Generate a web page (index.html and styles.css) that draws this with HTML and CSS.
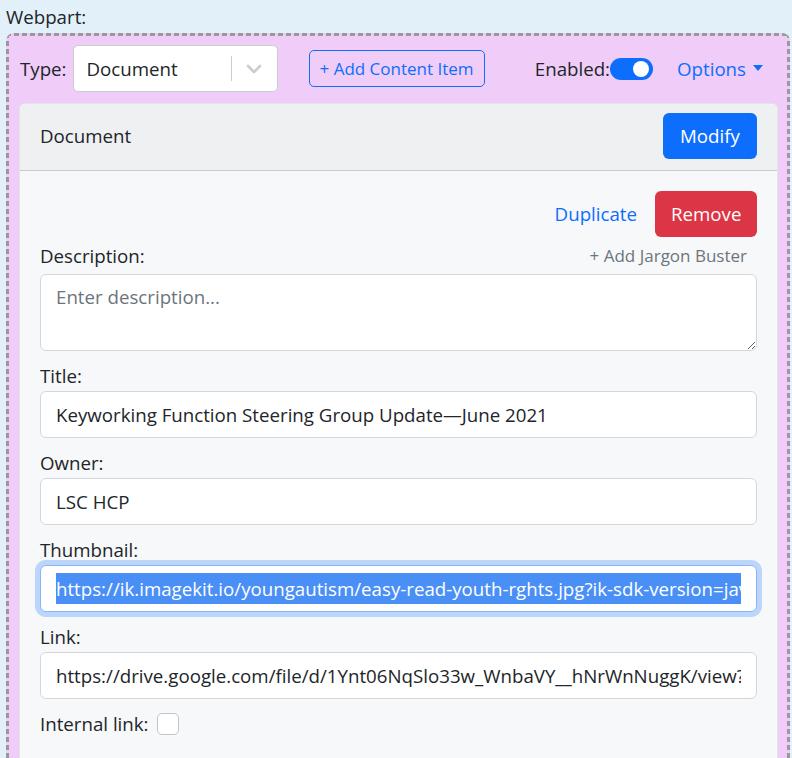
FILE: index.html
```html
<!DOCTYPE html>
<html lang="en">
<head>
<meta charset="utf-8">
<title>Webpart editor</title>
<link rel="stylesheet" href="styles.css">
</head>
<body class="page">
  <div class="webpart-label">Webpart:</div>
  <div class="webpart">
    <div class="toolbar">
      <div class="toolbar-left">
        <span class="type-label">Type:</span>
        <div class="select">
          <span class="select-value">Document</span>
          <span class="select-sep"></span>
          <span class="select-chevron">
            <svg width="16" height="12" viewBox="0 0 16 12"><path d="M2 3 L8 9 L14 3" fill="none" stroke="#cccccc" stroke-width="2.6" stroke-linecap="round" stroke-linejoin="round"/></svg>
          </span>
        </div>
        <button class="btn-outline">+ Add Content Item</button>
      </div>
      <div class="toolbar-right">
        <span class="enabled-label">Enabled:</span>
        <span class="switch"><span class="knob"></span></span>
        <button class="btn-options">Options <span class="caret"></span></button>
      </div>
    </div>

    <div class="card">
      <div class="card-header">
        <span class="card-title">Document</span>
        <button class="btn btn-primary">Modify</button>
      </div>
      <div class="card-body">
        <div class="actions">
          <button class="btn btn-link">Duplicate</button>
          <button class="btn btn-danger">Remove</button>
        </div>
        <div class="label-row">
          <label class="field-label">Description:</label>
          <button class="btn-jargon">+ Add Jargon Buster</button>
        </div>
        <textarea class="textarea" placeholder="Enter description..."></textarea>

        <label class="field-label">Title:</label>
        <input class="input" type="text" value="Keyworking Function Steering Group Update—June 2021">

        <label class="field-label">Owner:</label>
        <input class="input" type="text" value="LSC HCP">

        <label class="field-label">Thumbnail:</label>
        <div class="input input-focused">
          <div class="input-clip"><span class="selected">https://ik.imagekit.io/youngautism/easy-read-youth-rghts.jpg?ik-sdk-version=javascript-1.4.3&amp;updatedAt=1657291011</span></div>
        </div>

        <label class="field-label">Link:</label>
        <input class="input" type="text" value="https://drive.google.com/file/d/1Ynt06NqSlo33w_WnbaVY__hNrWnNuggK/view?usp=sharing">

        <div class="check-row">
          <span class="field-label-inline">Internal link:</span>
          <span class="checkbox"></span>
        </div>
      </div>
    </div>
  </div>
</body>
</html>
```

FILE: styles.css
```css
* { box-sizing: border-box; }

html, body { height: 100%; }

.page {
  margin: 0;
  padding: 2px 2px 0 6px;
  background: #e2f0fa;
  font-family: "Open Sans", "Noto Sans", sans-serif;
  font-size: 18.7px;
  line-height: 30px;
  color: #212529;
  overflow: hidden;
}

.webpart-label {
  height: 30px;
  margin: 0 0 1px 0;
}

.webpart {
  border-radius: 8px;
  background:
    repeating-linear-gradient(90deg, #999999 0 5px, transparent 5px 8px) left top / 100% 3px no-repeat,
    repeating-linear-gradient(90deg, #999999 0 5px, transparent 5px 8px) left bottom / 100% 3px no-repeat,
    repeating-linear-gradient(180deg, #999999 0 5px, transparent 5px 8px) left top / 3px 100% no-repeat,
    repeating-linear-gradient(180deg, #999999 0 5px, transparent 5px 8px) right top / 3px 100% no-repeat,
    #f0cdf8;
  padding: 12px 12px 0 13px;
  height: 900px;
}

.toolbar {
  display: flex;
  justify-content: space-between;
  align-items: center;
  height: 47px;
  margin-bottom: 11px;
}

.toolbar-left, .toolbar-right {
  display: flex;
  align-items: center;
}

.type-label { margin-left: 1px; margin-right: 6px; }

.select {
  width: 205px;
  height: 47px;
  background: #fff;
  border: 1px solid #cccccc;
  border-radius: 5px;
  display: flex;
  align-items: center;
  padding-left: 13px;
}

.select-value { flex: 1; }

.select-sep {
  width: 1px;
  height: 25px;
  background: #cccccc;
}

.select-chevron {
  width: 45px;
  display: flex;
  justify-content: center;
  align-items: center;
  height: 100%;
}

.select-chevron svg { display: block; }

.btn-outline {
  margin-left: 31px;
  height: 37px;
  padding: 0 10px;
  background: transparent;
  border: 1px solid #0d6efd;
  border-radius: 5px;
  color: #0d6efd;
  font-family: inherit;
  font-size: 17px;
  line-height: 26px;
}

.switch {
  width: 43px;
  height: 22px;
  border-radius: 11px;
  background: #0d6efd;
  display: flex;
  align-items: center;
  justify-content: flex-end;
  padding-right: 4px;
}

.knob {
  width: 16px;
  height: 16px;
  border-radius: 50%;
  background: #fff;
}

.btn-options {
  margin-left: 9px;
  padding: 0 15px;
  height: 40px;
  background: transparent;
  border: 0;
  color: #0d6efd;
  font-family: inherit;
  font-size: 18.7px;
  display: flex;
  align-items: center;
  gap: 7px;
}

.caret {
  width: 0;
  height: 0;
  border-top: 6px solid #0d6efd;
  border-left: 5.5px solid transparent;
  border-right: 5.5px solid transparent;
  margin-top: -2px;
}

.card {
  background: #f7f8fa;
  border: 1px solid rgba(0,0,0,0.08);
  border-radius: 6px;
  overflow: hidden;
}

.card-header {
  display: flex;
  justify-content: space-between;
  align-items: center;
  background: #eff0f2;
  padding: 9px 20px 11px 20px;
  border-bottom: 1px solid #c9cacc;
}

.btn {
  height: 46px;
  padding: 0 15px;
  border: 1px solid transparent;
  border-radius: 6px;
  font-family: inherit;
  font-size: 18.7px;
  line-height: 30px;
  cursor: pointer;
}

.btn-primary {
  background: #0d6efd;
  color: #fff;
  width: 94px;
}

.btn-danger {
  background: #dc3545;
  color: #fff;
  width: 102px;
}

.btn-link {
  background: transparent;
  color: #0d6efd;
  margin-right: 2px;
}

.card-body {
  padding: 20px 20px 40px 20px;
}

.actions {
  display: flex;
  justify-content: flex-end;
  margin-bottom: 4px;
}

.label-row {
  display: flex;
  justify-content: space-between;
  align-items: center;
  height: 30px;
  margin-bottom: 3px;
}

.field-label {
  display: block;
  height: 30px;
}

.btn-jargon {
  background: transparent;
  border: 0;
  padding: 0 10px;
  color: #6c757d;
  font-family: inherit;
  font-size: 17px;
  line-height: 26px;
}

.textarea {
  display: block;
  width: 100%;
  height: 77px;
  margin: 0 0 10px 0;
  padding: 7px 15px;
  border: 1px solid #d3d7dc;
  border-radius: 6px;
  background: #fff;
  font-family: inherit;
  font-size: 18.7px;
  line-height: 30px;
  color: #212529;
  resize: vertical;
}

.textarea::placeholder { color: #6c757d; opacity: 1; }

.input {
  display: block;
  width: 100%;
  height: 47px;
  margin: 0 0 10px 0;
  padding: 0 15px;
  border: 1px solid #d3d7dc;
  border-radius: 6px;
  background: #fff;
  font-family: inherit;
  font-size: 18.7px;
  line-height: 30px;
  color: #212529;
  outline: none;
}

.input-focused {
  border-color: #86b7fe;
  box-shadow: 0 0 0 5px rgba(13,110,253,0.25);
  display: flex;
  align-items: center;
}

.input-clip {
  overflow: hidden;
  white-space: nowrap;
  width: 100%;
  height: 31px;
}

.selected {
  background: #4a8ff6;
  color: #fff;
  display: inline-block;
  height: 31px;
  line-height: 31px;
}

.check-row {
  display: flex;
  align-items: center;
  height: 30px;
}

.checkbox {
  width: 22px;
  height: 22px;
  margin-left: 8px;
  background: #fff;
  border: 1px solid #c4c4c4;
  border-radius: 5px;
}
```
